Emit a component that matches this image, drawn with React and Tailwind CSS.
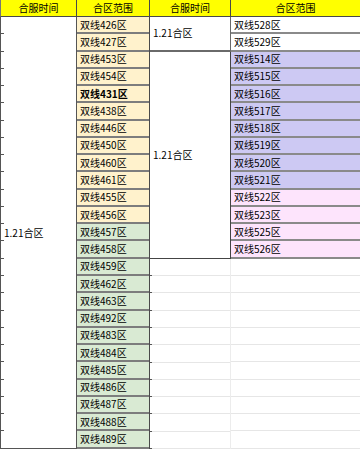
import * as React from 'react';

const LEFT_ROWS = [
    { name: '双线426区', tone: 'beige' },
    { name: '双线427区', tone: 'beige' },
    { name: '双线453区', tone: 'beige' },
    { name: '双线454区', tone: 'beige' },
    { name: '双线431区', tone: 'beige', bold: true },
    { name: '双线438区', tone: 'beige' },
    { name: '双线446区', tone: 'beige' },
    { name: '双线450区', tone: 'beige' },
    { name: '双线460区', tone: 'beige' },
    { name: '双线461区', tone: 'beige' },
    { name: '双线455区', tone: 'beige' },
    { name: '双线456区', tone: 'beige' },
    { name: '双线457区', tone: 'green' },
    { name: '双线458区', tone: 'green' },
    { name: '双线459区', tone: 'green' },
    { name: '双线462区', tone: 'green' },
    { name: '双线463区', tone: 'green' },
    { name: '双线492区', tone: 'green' },
    { name: '双线483区', tone: 'green' },
    { name: '双线484区', tone: 'green' },
    { name: '双线485区', tone: 'green' },
    { name: '双线486区', tone: 'green' },
    { name: '双线487区', tone: 'green' },
    { name: '双线488区', tone: 'green' },
    { name: '双线489区', tone: 'green' },
];

const RIGHT_ROWS = [
    { name: '双线528区', tone: 'white' },
    { name: '双线529区', tone: 'white' },
    { name: '双线514区', tone: 'purple' },
    { name: '双线515区', tone: 'purple' },
    { name: '双线516区', tone: 'purple' },
    { name: '双线517区', tone: 'purple' },
    { name: '双线518区', tone: 'purple' },
    { name: '双线519区', tone: 'purple' },
    { name: '双线520区', tone: 'purple' },
    { name: '双线521区', tone: 'purple' },
    { name: '双线522区', tone: 'pink' },
    { name: '双线523区', tone: 'pink' },
    { name: '双线525区', tone: 'pink' },
    { name: '双线526区', tone: 'pink' },
];

const TONES = {
    beige: 'bg-[#fff2cc]',
    green: 'bg-[#d9ead3]',
    white: 'bg-white',
    purple: 'bg-[#cdc9f3]',
    pink: 'bg-[#fde4fc]',
};

const EMPTY = Array.from({ length: 11 }, (_, i) => i);

function HeaderCell({ children, className = '' }) {
    return (
        <div className={`h-[17px] bg-[#ffff00] border-b border-r border-[#4a4a4a] flex items-center justify-center ${className}`}>
            {children}
        </div>
    );
}

function ZoneCell({ row }) {
    return (
        <div className={`h-[17.28px] flex items-center pl-[3px] border-b-2 border-[#7d7d7d] ${TONES[row.tone]} ${row.bold ? 'font-bold' : ''}`}>
            {row.name}
        </div>
    );
}

export default function App() {
    return (
        <div className="w-[360px] h-[450px] overflow-hidden bg-white text-black text-[10px] leading-none font-['Noto_Sans_CJK_SC','Noto_Sans',sans-serif]">
            <div className="flex">
                {/* 合服时间 (left) */}
                <div className="w-[77px] flex flex-col">
                    <HeaderCell className="border-l border-l-[#777]">合服时间</HeaderCell>
                    <div className="relative h-[432px] border-l border-r border-b border-[#555]">
                        {LEFT_ROWS.map(r => (
                            <div key={r.name} className="h-[17.28px] flex items-end">
                                <div className="w-[3px] h-px bg-[#555]" />
                            </div>
                        ))}
                        <div className="absolute inset-0 flex items-center pl-[3px]">1.21合区</div>
                    </div>
                </div>

                {/* 合区范围 (left) */}
                <div className="w-[73px] flex flex-col border-r border-[#4a4a4a]">
                    <HeaderCell className="border-r-0">合区范围</HeaderCell>
                    {LEFT_ROWS.map(r => <ZoneCell key={r.name} row={r} />)}
                </div>

                {/* 合服时间 (right) */}
                <div className="w-[81px] flex flex-col">
                    <HeaderCell>合服时间</HeaderCell>
                    <div className="h-[34.56px] flex items-center pl-[3px] border-b-2 border-r border-[#6a6a6a]">1.21合区</div>
                    <div className="h-[207.36px] flex items-center pl-[3px] border-b border-r border-[#444]">1.21合区</div>
                    {EMPTY.map(i => (
                        <div key={i} className="h-[17.28px] flex items-end border-r border-[#ececec]">
                            <div className="w-[2px] h-px bg-[#555]" />
                            <div className="flex-1 h-px bg-[#e6e6e6]" />
                        </div>
                    ))}
                </div>

                {/* 合区范围 (right) */}
                <div className="flex-1 flex flex-col">
                    <HeaderCell className="border-r-0">合区范围</HeaderCell>
                    {RIGHT_ROWS.map(r => (
                        <div key={r.name} className={`h-[17.28px] flex items-center pl-[3px] border-b-2 border-[#8a8a8a] ${TONES[r.tone]}`}>
                            {r.name}
                        </div>
                    ))}
                    {EMPTY.map(i => (
                        <div key={i} className="h-[17.28px] border-b border-[#e6e6e6]" />
                    ))}
                </div>
            </div>
        </div>
    );
}
